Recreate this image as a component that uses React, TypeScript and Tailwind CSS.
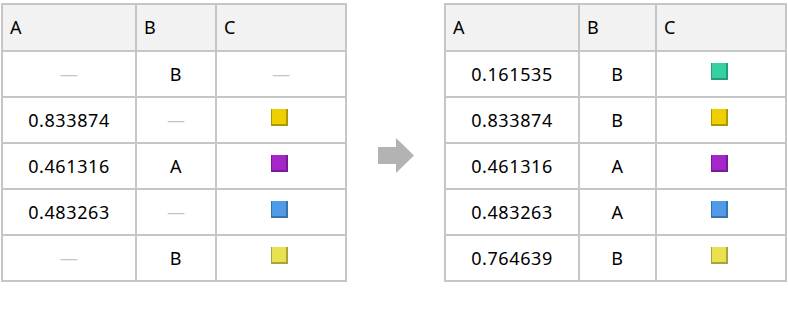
const font = { fontFamily: '"Noto Sans", "Open Sans", sans-serif' };

type Cell = string | null | { color: string; edge: string };

const swatches = {
  teal: { color: "#36d1a1", edge: "#289b77" },
  gold: { color: "#eed000", edge: "#ae9800" },
  purple: { color: "#a526c9", edge: "#781b94" },
  blue: { color: "#4f9be8", edge: "#3a72ab" },
  lemon: { color: "#eae150", edge: "#aca43a" },
};

const before: Cell[][] = [
  [null, "B", null],
  ["0.833874", null, swatches.gold],
  ["0.461316", "A", swatches.purple],
  ["0.483263", null, swatches.blue],
  [null, "B", swatches.lemon],
];

const after: Cell[][] = [
  ["0.161535", "B", swatches.teal],
  ["0.833874", "B", swatches.gold],
  ["0.461316", "A", swatches.purple],
  ["0.483263", "A", swatches.blue],
  ["0.764639", "B", swatches.lemon],
];

function Value({ cell }: { cell: Cell }) {
  if (cell === null) return <span className="text-[#c4c4c4] tracking-normal">—</span>;
  if (typeof cell === "string") return <span>{cell}</span>;
  return (
    <span
      className="block w-[17px] h-[17px] mb-[6px] mr-[4px] border-l border-r-2 border-b-2"
      style={{ backgroundColor: cell.color, borderColor: cell.edge }}
    />
  );
}

function DataTable({ rows, cols }: { rows: Cell[][]; cols: string }) {
  return (
    <div className={`grid ${cols} gap-[2px] p-[2px] bg-[#c6c6c6]`}>
      {["A", "B", "C"].map((h) => (
        <div key={h} className="h-[45px] bg-[#f2f2f2] flex items-center pl-[7px] text-[18px] text-black">
          {h}
        </div>
      ))}
      {rows.map((row, i) =>
        row.map((cell, j) => (
          <div key={`${i}-${j}`} className="h-[44px] bg-white flex items-center justify-center text-[18px] tracking-[0.6px] text-black">
            <Value cell={cell} />
          </div>
        ))
      )}
    </div>
  );
}

export default function App() {
  return (
    <div className="w-[788px] h-[314px] bg-white flex items-start pl-[1px] pt-[3px]" style={font}>
      <DataTable rows={before} cols="grid-cols-[132px_78px_128px]" />
      <div className="w-[97px] flex justify-center mt-[135px]">
        <svg width="36" height="35" viewBox="0 0 36 35">
          <polygon points="0,9 18,9 18,0 36,17.5 18,35 18,26 0,26" fill="#b3b3b3" />
        </svg>
      </div>
      <DataTable rows={after} cols="grid-cols-[132px_75px_128px]" />
    </div>
  );
}
